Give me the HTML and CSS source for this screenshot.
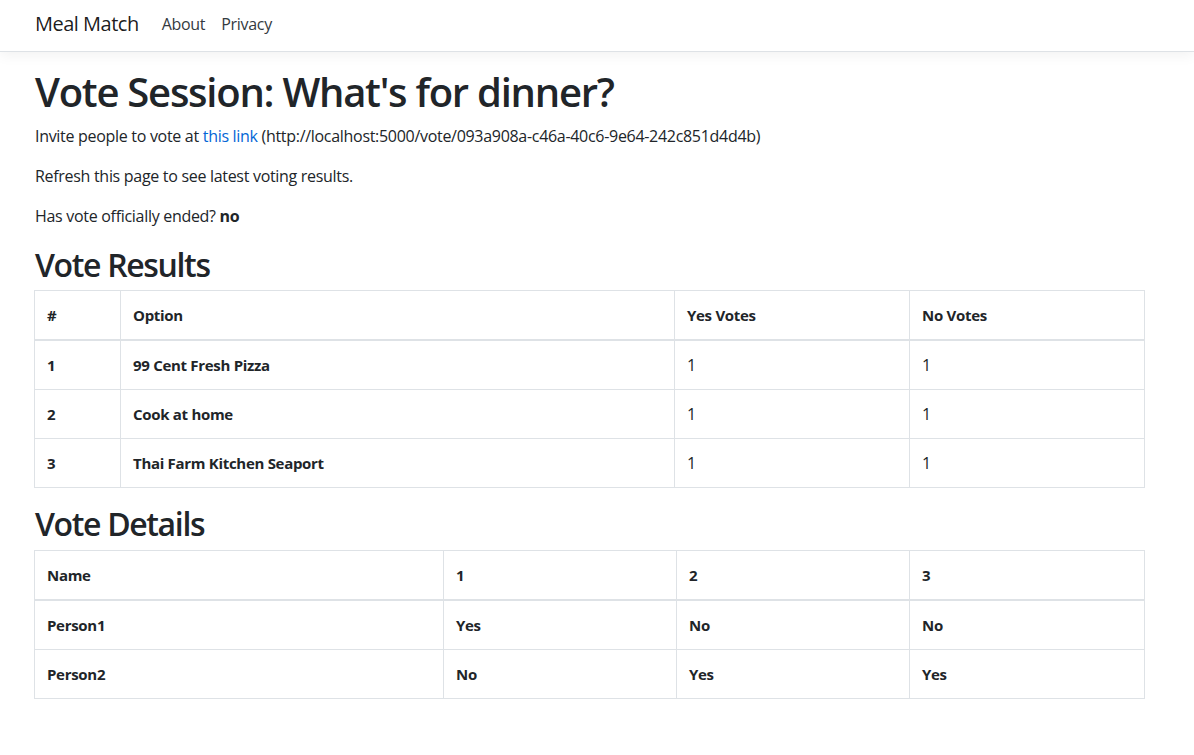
FILE: index.html
```html
<!DOCTYPE html>
<html lang="en">
<head>
<meta charset="utf-8">
<title>Meal Match</title>
<link rel="stylesheet" href="styles.css">
</head>
<body>
<header class="navbar">
  <div class="nav-inner">
    <a class="brand" href="#">Meal Match</a>
    <nav class="nav-links">
      <a class="nav-link" href="#">About</a>
      <a class="nav-link" href="#">Privacy</a>
    </nav>
  </div>
</header>
<main class="container">
  <h1 class="title">Vote Session: What's for dinner?</h1>
  <p>Invite people to vote at <a class="link" href="#">this link</a> (http://localhost:5000/vote/093a908a-c46a-40c6-9e64-242c851d4d4b)</p>
  <p>Refresh this page to see latest voting results.</p>
  <p>Has vote officially ended? <b>no</b></p>

  <h2 class="section">Vote Results</h2>
  <table class="table">
    <colgroup>
      <col class="c-num"><col class="c-opt"><col class="c-yes"><col class="c-no">
    </colgroup>
    <thead>
      <tr><th>#</th><th>Option</th><th>Yes Votes</th><th>No Votes</th></tr>
    </thead>
    <tbody>
      <tr><th>1</th><th>99 Cent Fresh Pizza</th><td>1</td><td>1</td></tr>
      <tr><th>2</th><th>Cook at home</th><td>1</td><td>1</td></tr>
      <tr><th>3</th><th>Thai Farm Kitchen Seaport</th><td>1</td><td>1</td></tr>
    </tbody>
  </table>

  <h2 class="section">Vote Details</h2>
  <table class="table">
    <colgroup>
      <col class="d-name"><col class="d-1"><col class="d-2"><col class="d-3">
    </colgroup>
    <thead>
      <tr><th>Name</th><th>1</th><th>2</th><th>3</th></tr>
    </thead>
    <tbody>
      <tr><th>Person1</th><th>Yes</th><th>No</th><th>No</th></tr>
      <tr><th>Person2</th><th>No</th><th>Yes</th><th>Yes</th></tr>
    </tbody>
  </table>
</main>
</body>
</html>
```

FILE: styles.css
```css
* { box-sizing: border-box; }

html, body {
  margin: 0;
  padding: 0;
  background: #fff;
}

body {
  font-family: "Open Sans", "Noto Sans", "Liberation Sans", sans-serif;
  font-size: 16px;
  line-height: 1.5;
  color: #212529;
  letter-spacing: -0.3px;
}

.navbar {
  height: 52px;
  border-bottom: 1px solid #dee2e6;
  box-shadow: 0 4px 12px rgba(0, 0, 0, 0.05);
  margin-bottom: 16px;
  background: #fff;
}

.nav-inner {
  width: 1110px;
  margin-left: 34px;
  height: 51px;
  padding-bottom: 4px;
  display: flex;
  align-items: center;
}

.brand {
  font-size: 20px;
  line-height: 30px;
  color: rgba(0, 0, 0, 0.9);
  text-decoration: none;
  margin-right: 15px;
  padding-left: 1px;
  letter-spacing: -0.5px;
}

.nav-links {
  display: flex;
}

.nav-link {
  padding: 0 8px;
  color: #343a40;
  text-decoration: none;
  line-height: 24px;
}

.container {
  width: 1110px;
  margin-left: 34px;
}

.title {
  font-size: 40px;
  font-weight: 600;
  line-height: 1.2;
  margin: 0 0 8px;
  padding-left: 1px;
  letter-spacing: -1.25px;
}

p {
  margin: 0 0 16px;
  padding-left: 1px;
}

p b { font-weight: 700; }

.link {
  color: #0366d6;
  text-decoration: none;
}

.section {
  font-size: 32px;
  font-weight: 600;
  line-height: 1.2;
  margin: 0 0 6px;
  padding-top: 2px;
  padding-left: 1px;
  letter-spacing: -1.35px;
}

.table {
  width: 1110px;
  border-collapse: collapse;
  table-layout: fixed;
  margin-bottom: 15px;
  border: 1px solid #dee2e6;
}

.table th,
.table td {
  padding: 12px;
  line-height: 24px;
  text-align: left;
  vertical-align: top;
  border: 1px solid #dee2e6;
}

.table th { font-weight: 700; font-size: 15px; }
.table td { font-weight: 400; }

.table thead th {
  border-bottom: 2px solid #dee2e6;
}

.c-num { width: 86px; }
.c-opt { width: 554px; }
.c-yes { width: 235px; }
.c-no { width: 235px; }

.d-name { width: 409px; }
.d-1 { width: 233px; }
.d-2 { width: 233px; }
.d-3 { width: 235px; }
```
